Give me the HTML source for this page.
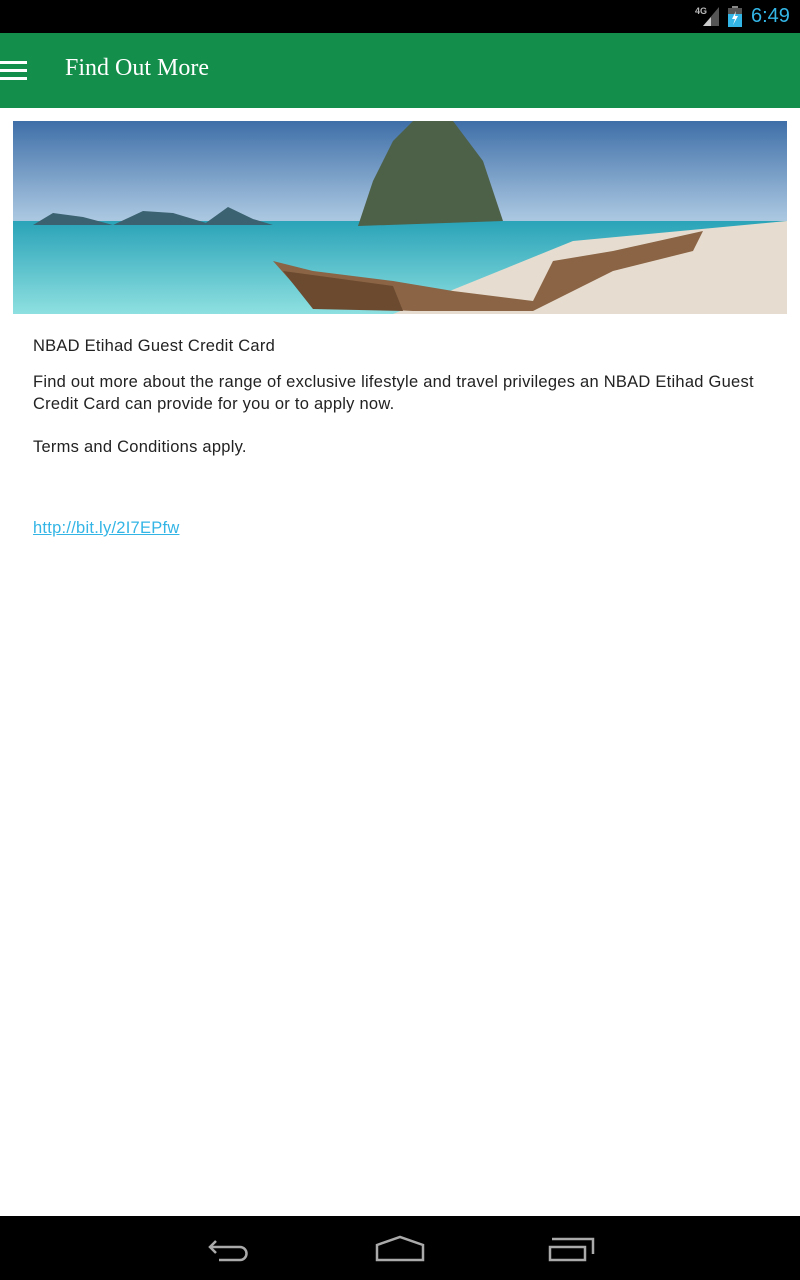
<!DOCTYPE html>
<html><head><meta charset="utf-8"><style>
html,body{margin:0;padding:0;width:800px;height:1280px;background:#fff;overflow:hidden;position:relative;font-family:"Liberation Sans",sans-serif}
.sb{position:absolute;top:0;left:0;width:800px;height:33px;background:#000}
.tb{position:absolute;top:33px;left:0;width:800px;height:75px;background:#138f4b}
.title{position:absolute;left:65px;top:55px;color:#fff;font-family:"Liberation Serif",serif;font-size:24px}
.ham{position:absolute;left:0;width:27px;height:3px;background:#fff}
.img{position:absolute;left:13px;top:121px;width:774px;height:193px;overflow:hidden}
.t{position:absolute;left:33px;color:#222;font-size:16.5px;line-height:22px;letter-spacing:0.25px}
.nb{position:absolute;left:0;top:1216px;width:800px;height:64px;background:#000}
</style></head><body>
<div class="sb">
<svg style="position:absolute;left:695px;top:5px" width="24" height="22"><text x="0" y="9" fill="#bbb" font-size="9" font-family="Liberation Sans" font-weight="bold">4G</text><polygon points="24,2 24,21 8,21" fill="#555"/><polygon points="16,12 16,21 8,21" fill="#ccc"/></svg>
<svg style="position:absolute;left:728px;top:6px" width="14" height="21"><rect x="4" y="0" width="6" height="2" fill="#888"/><rect x="0" y="2" width="14" height="19" fill="#555"/><rect x="0" y="8" width="14" height="13" fill="#33b5e5"/><polygon points="8,5 4,13 7,13 5,19 10,10 7,10" fill="#fff"/></svg>
<div style="position:absolute;left:751px;top:5px;color:#33b5e5;font-size:20px">6:49</div>
</div>
<div class="tb"></div>
<div class="ham" style="top:61px"></div><div class="ham" style="top:69px"></div><div class="ham" style="top:77px"></div>
<div class="title">Find Out More</div>
<div class="img"><svg width="774" height="193">
<defs><linearGradient id="sky" x1="0" y1="0" x2="0" y2="1"><stop offset="0" stop-color="#3f6fa8"/><stop offset=".5" stop-color="#a9c6e0"/><stop offset="1" stop-color="#d8e6ef"/></linearGradient>
<linearGradient id="sea" x1="0" y1="0" x2="0" y2="1"><stop offset="0" stop-color="#2aa3b8"/><stop offset="1" stop-color="#8ee0e0"/></linearGradient></defs>
<rect width="774" height="193" fill="url(#sky)"/>
<rect y="100" width="774" height="93" fill="url(#sea)"/>
<polygon points="380,193 560,120 774,100 774,193" fill="#e6ddd0"/>
<path d="M20,104 40,92 70,96 100,104Z M100,104 130,90 160,92 200,104Z M190,104 215,86 240,98 260,104Z" fill="#3a6270"/>
<path d="M345,105 360,60 380,20 400,0 440,0 470,40 490,100 Z" fill="#4d6048"/>
<path d="M260,140 300,150 380,160 440,170 520,180 540,140 600,130 690,110 680,130 600,150 520,190 400,190 300,185 Z" fill="#8a6444"/>
<path d="M270,150 380,165 390,190 300,188 Z" fill="#6b4a30"/>
</svg></div>
<div class="t" style="top:335px">NBAD Etihad Guest Credit Card</div>
<div class="t" style="top:371px;width:745px">Find out more about the range of exclusive lifestyle and travel privileges an NBAD Etihad Guest Credit Card can provide for you or to apply now.</div>
<div class="t" style="top:436px">Terms and Conditions apply.</div>
<div class="t" style="top:517px;color:#33b5e5;text-decoration:underline">http://bit.ly/2I7EPfw</div>
<div class="nb"><svg width="800" height="64">
<g fill="none" stroke="#aaa" stroke-width="2.5">
<path d="M210,31 h30 a6.5,6.5 0 0 1 0,13 h-21"/><path d="M216,25 l-6,6 l6,6"/>
<path d="M377,29 l23,-8 l23,8 v15 h-46 z"/>
<rect x="550" y="31" width="35" height="13"/><path d="M552,23 h41 v15"/>
</g></svg></div>
</body></html>
